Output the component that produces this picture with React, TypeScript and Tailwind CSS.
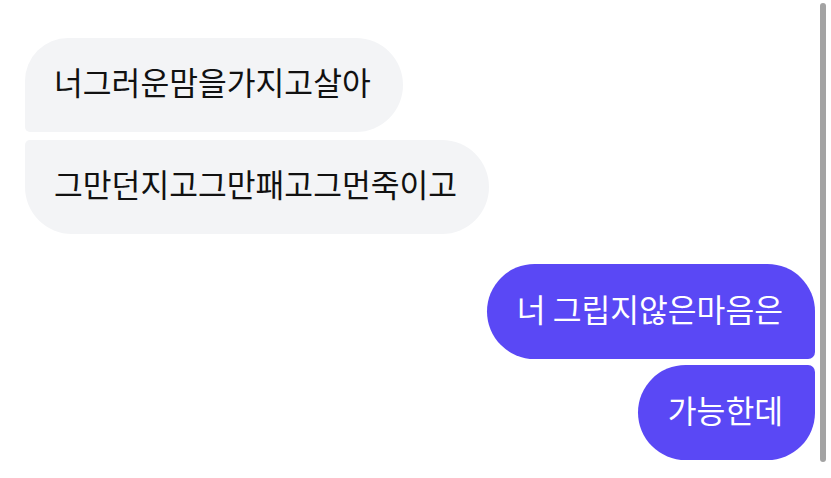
import React from "react";

type Msg = { text: string; mine: boolean; first: boolean; last: boolean };

const messages: Msg[] = [
  { text: "너그러운맘을가지고살아", mine: false, first: true, last: false },
  { text: "그만던지고그만패고그먼죽이고", mine: false, first: false, last: true },
  { text: "너 그립지않은마음은", mine: true, first: true, last: false },
  { text: "가능한데", mine: true, first: false, last: true },
];

function Bubble({ msg }: { msg: Msg }) {
  if (msg.mine) {
    return (
      <div
        className={
          "h-[95px] flex items-center pl-[30px] pr-[32px] pb-[5px] bg-[#5a48f5] text-white rounded-l-[48px] " +
          (msg.first ? "rounded-tr-[48px] rounded-br-[7px]" : "rounded-tr-[7px] rounded-br-[48px]")
        }
      >
        {msg.text}
      </div>
    );
  }
  return (
    <div
      className={
        "h-[94px] flex items-center pl-[29px] pr-[32px] pb-[6px] bg-[#f3f4f6] text-[#111111] rounded-r-[48px] " +
        (msg.first ? "rounded-tl-[44px] rounded-bl-[5px]" : "rounded-tl-[5px] rounded-bl-[48px]")
      }
    >
      {msg.text}
    </div>
  );
}

export default function App() {
  const theirs = messages.filter((m) => !m.mine);
  const mine = messages.filter((m) => m.mine);

  return (
    <div className="w-[831px] h-[478px] bg-white flex overflow-hidden font-['Noto_Sans_CJK_KR','Noto_Sans',sans-serif] text-[31.3px] leading-none [font-feature-settings:'palt']">
      <div className="flex-1 flex flex-col pl-[25px] pr-[5px] pt-[38px]">
        <div className="flex flex-col items-start gap-[8px]">
          {theirs.map((m, i) => (
            <Bubble key={i} msg={m} />
          ))}
        </div>
        <div className="flex flex-col items-end gap-[6px] mt-[30px]">
          {mine.map((m, i) => (
            <Bubble key={i} msg={m} />
          ))}
        </div>
      </div>
      <div className="w-[11px] pt-[3px] pr-[5px]">
        <div className="w-[6px] h-[459px] rounded-full bg-[#a3a3a3]" />
      </div>
    </div>
  );
}
